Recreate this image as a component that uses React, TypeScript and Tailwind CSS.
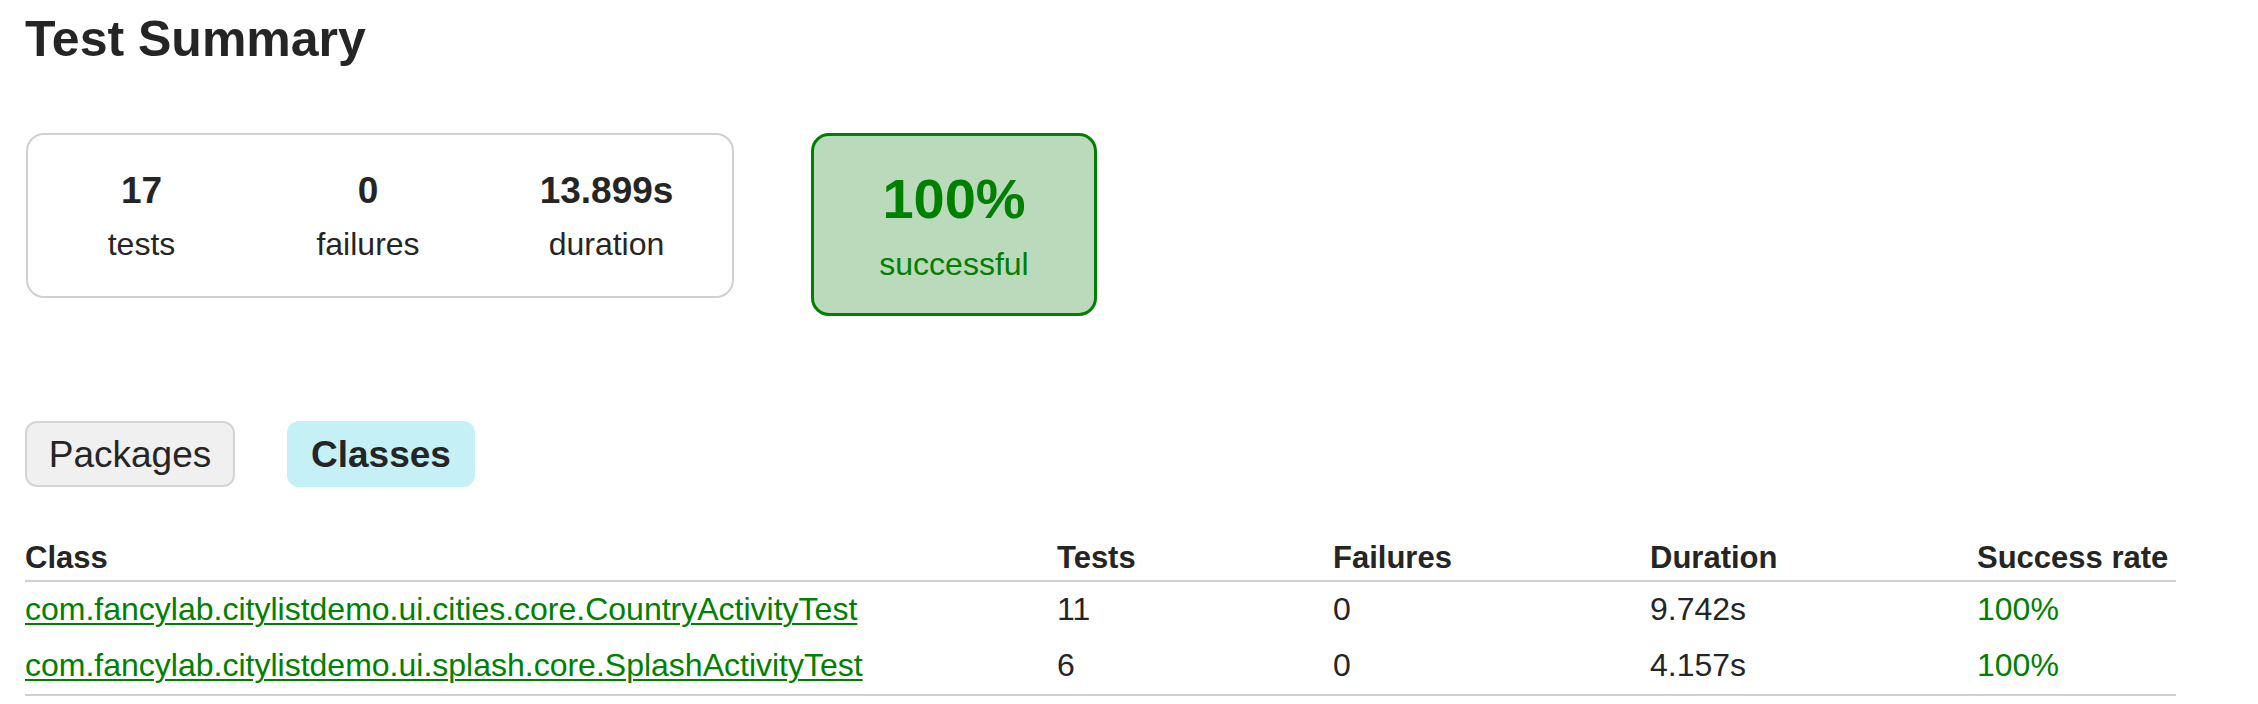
import React from 'react';

interface ClassRow {
  name: string;
  tests: number;
  failures: number;
  duration: string;
  successRate: string;
}

const rows: ClassRow[] = [
  { name: 'com.fancylab.citylistdemo.ui.cities.core.CountryActivityTest', tests: 11, failures: 0, duration: '9.742s', successRate: '100%' },
  { name: 'com.fancylab.citylistdemo.ui.splash.core.SplashActivityTest', tests: 6, failures: 0, duration: '4.157s', successRate: '100%' },
];

function Counter({ value, label, width }: { value: string; label: string; width: string }) {
  return (
    <div className={`${width} flex flex-col items-center pt-[37px] pb-[36px]`}>
      <div className="text-[37px] leading-[37px] font-bold">{value}</div>
      <div className="mt-[19px] text-[32px] leading-[32px]">{label}</div>
    </div>
  );
}

export default function App() {
  return (
    <div className="min-h-screen bg-white text-[#252525] pt-[14px] pl-[25px] font-['Liberation_Sans',Arial,sans-serif]">
      <h1 className="text-[50px] leading-[50px] font-bold">Test Summary</h1>

      {/* summary boxes */}
      <div className="mt-[69px] flex items-start">
        <div className="ml-[1px] w-[708px] flex border-2 border-[#d0d0d0] rounded-[18px]">
          <Counter value="17" label="tests" width="w-[227px]" />
          <Counter value="0" label="failures" width="w-[226px]" />
          <Counter value="13.899s" label="duration" width="w-[251px]" />
        </div>
        <div className="ml-[77px] w-[286px] flex flex-col items-center pt-[35px] pb-[33px] bg-[#bbd9bb] border-[3px] border-[#008000] rounded-[18px] text-[#008000]">
          <div className="text-[56px] leading-[56px] font-bold">100%</div>
          <div className="mt-[21px] text-[32px] leading-[32px]">successful</div>
        </div>
      </div>

      {/* tabs */}
      <div className="mt-[105px] flex gap-[52px]">
        <div className="w-[210px] h-[66px] flex items-center justify-center bg-[#f0f0f0] border-2 border-[#d4d4d4] rounded-[12px] text-[37px] leading-[37px]">
          Packages
        </div>
        <div className="w-[188px] h-[66px] flex items-center justify-center bg-[#c5f0f5] rounded-[12px] text-[37px] leading-[37px] font-bold">
          Classes
        </div>
      </div>

      {/* classes table */}
      <table className="mt-[49px] w-[2151px] border-collapse table-fixed">
        <colgroup>
          <col className="w-[1032px]" />
          <col className="w-[276px]" />
          <col className="w-[317px]" />
          <col className="w-[327px]" />
          <col />
        </colgroup>
        <thead>
          <tr className="border-b-2 border-[#d0d0d0]">
            <th className="p-0 text-left font-bold text-[31px] leading-[44px]">Class</th>
            <th className="p-0 text-left font-bold text-[31px] leading-[44px]">Tests</th>
            <th className="p-0 text-left font-bold text-[31px] leading-[44px]">Failures</th>
            <th className="p-0 text-left font-bold text-[31px] leading-[44px]">Duration</th>
            <th className="p-0 text-left font-bold text-[31px] leading-[44px] whitespace-nowrap">Success rate</th>
          </tr>
        </thead>
        <tbody className="border-b-2 border-[#d0d0d0]">
          {rows.map((row) => (
            <tr key={row.name} className="text-[32px] leading-[48px]">
              <td className="pt-[3px] pb-[5px] px-0">
                <a href="#" className="text-[#008000] underline underline-offset-[3px] decoration-2">{row.name}</a>
              </td>
              <td className="pt-[3px] pb-[5px] px-0">{row.tests}</td>
              <td className="pt-[3px] pb-[5px] px-0">{row.failures}</td>
              <td className="pt-[3px] pb-[5px] px-0">{row.duration}</td>
              <td className="pt-[3px] pb-[5px] px-0 text-[#008000]">{row.successRate}</td>
            </tr>
          ))}
        </tbody>
      </table>
    </div>
  );
}
